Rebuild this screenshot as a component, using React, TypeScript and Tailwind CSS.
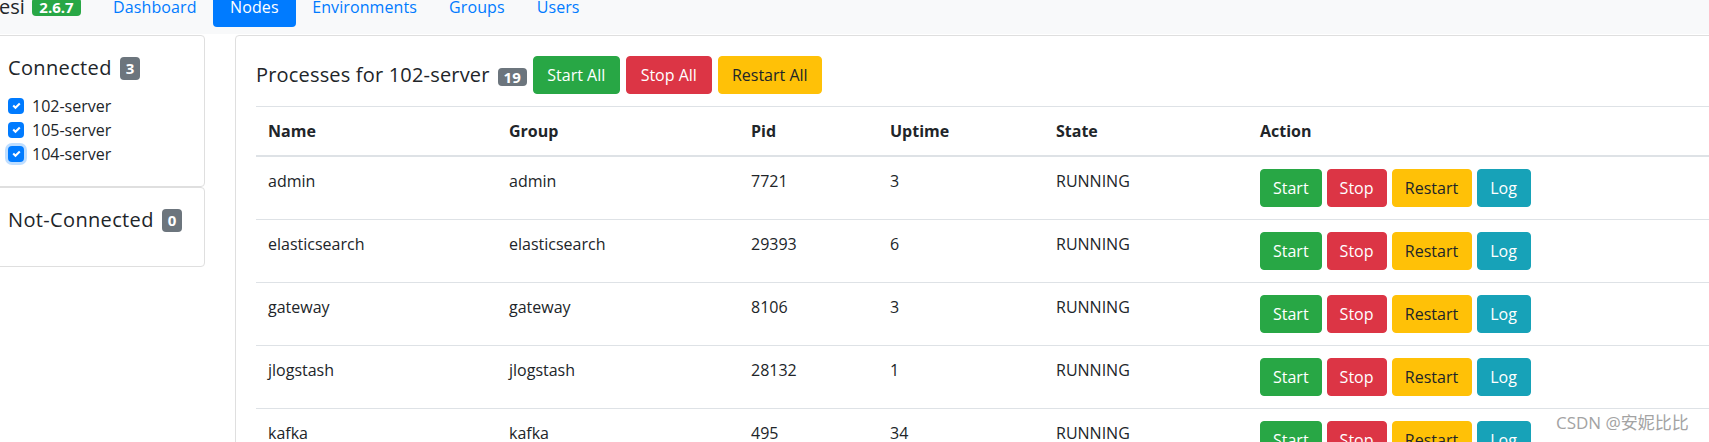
import React from 'react'

type Proc = {
  name: string
  group: string
  pid: string
  uptime: string
  state: string
}

const processes: Proc[] = [
  { name: 'admin', group: 'admin', pid: '7721', uptime: '3', state: 'RUNNING' },
  { name: 'elasticsearch', group: 'elasticsearch', pid: '29393', uptime: '6', state: 'RUNNING' },
  { name: 'gateway', group: 'gateway', pid: '8106', uptime: '3', state: 'RUNNING' },
  { name: 'jlogstash', group: 'jlogstash', pid: '28132', uptime: '1', state: 'RUNNING' },
  { name: 'kafka', group: 'kafka', pid: '495', uptime: '34', state: 'RUNNING' },
]

const servers = [
  { name: '102-server', focused: false },
  { name: '105-server', focused: false },
  { name: '104-server', focused: true },
]

const navLinks = ['Dashboard', 'Nodes', 'Environments', 'Groups', 'Users']

function CheckBox({ focused }: { focused: boolean }) {
  return (
    <span
      className={
        'flex h-4 w-4 shrink-0 items-center justify-center rounded-[4px] bg-[#007bff] ' +
        (focused ? 'shadow-[0_0_0_3px_rgba(0,123,255,0.25)]' : '')
      }
    >
      <svg width="9" height="8" viewBox="0 0 8 8">
        <path
          fill="#fff"
          d="M6.564.75l-3.59 3.612-1.538-1.55L0 4.26 2.974 7.25 8 2.193z"
        />
      </svg>
    </span>
  )
}

function Btn({
  label,
  tone,
  className = '',
}: {
  label: string
  tone: 'success' | 'danger' | 'warning' | 'info'
  className?: string
}) {
  const cls =
    tone === 'success'
      ? 'border-[#28a745] bg-[#28a745] text-white'
      : tone === 'danger'
        ? 'border-[#dc3545] bg-[#dc3545] text-white'
        : tone === 'warning'
          ? 'border-[#ffc107] bg-[#ffc107] text-[#212529]'
          : 'border-[#17a2b8] bg-[#17a2b8] text-white'

  return (
    <button
      type="button"
      className={
        'h-[38px] shrink-0 rounded-[4px] border px-3 text-[16px] leading-6 ' + cls + ' ' + className
      }
    >
      {label}
    </button>
  )
}

function SideCard({
  title,
  count,
  children,
}: {
  title: string
  count: number
  children?: React.ReactNode
}) {
  return (
    <div className="rounded-[4px] border border-[#dfdfdf] bg-white p-5">
      <h5 className="mb-[14px] flex items-center text-[20px] leading-6 font-medium tracking-[0.35px]">
        {title}
        <span className="ml-[8px] inline-block rounded-[4px] bg-[#6c757d] px-[6px] py-[4px] text-[15px] leading-[15px] font-bold tracking-normal text-white">
          {count}
        </span>
      </h5>
      {children}
    </div>
  )
}

export default function App() {
  return (
    <div className="relative h-[442px] w-full overflow-hidden bg-white font-['Open_Sans','Noto_Sans_CJK_SC',sans-serif] text-[16px] text-[#212529]">
      <div className="-mt-[20px]">
        <nav className="flex h-[54px] items-center bg-[#f8f9fa]">
          <a className="-ml-px mr-4 flex items-center py-[5px] text-[20px] leading-[30px]">
            esi
            <span className="ml-[7px] inline-block rounded-[4px] bg-[#28a745] px-[7.5px] py-[1.5px] text-[15px] leading-[15px] font-bold text-white">
              2.6.7
            </span>
          </a>
          <ul className="flex">
            {navLinks.map((link) => (
              <li key={link}>
                <a
                  className={
                    'block rounded-[4px] py-2 leading-6 tracking-[0.1px] ' +
                    (link === 'Nodes'
                      ? 'bg-[#007bff] px-[17.5px] text-white'
                      : 'px-4 text-[#007bff]')
                  }
                >
                  {link}
                </a>
              </li>
            ))}
          </ul>
        </nav>

        <div className="mt-px flex">
          <div className="-ml-[13px] w-[218px] shrink-0">
            <SideCard title="Connected" count={3}>
              <div>
                {servers.map((server) => (
                  <label key={server.name} className="flex h-6 items-center gap-2 leading-6">
                    <CheckBox focused={server.focused} />
                    {server.name}
                  </label>
                ))}
              </div>
            </SideCard>
            <SideCard title="Not-Connected" count={0} />
          </div>

          <div className="ml-[30px] w-[1500px] shrink-0 rounded-[4px] border border-[#dfdfdf] bg-white p-5">
            <div className="mb-3 flex h-[38px] items-center">
              <h5 className="text-[20px] leading-6 font-medium tracking-[0.18px]">
                Processes for 102-server
              </h5>
              <span className="ml-2 mt-[4px] inline-block rounded-[4px] bg-[#6c757d] px-[6px] py-[1.5px] text-[15px] leading-[15px] font-bold text-white">
                19
              </span>
              <div className="ml-[6px] flex gap-[6px]">
                <Btn label="Start All" tone="success" className="w-[87px] px-0" />
                <Btn label="Stop All" tone="danger" className="w-[86px] px-0" />
                <Btn label="Restart All" tone="warning" className="w-[104px] px-0" />
              </div>
            </div>

            <table className="w-[1458px] table-fixed border-collapse">
              <colgroup>
                <col className="w-[241px]" />
                <col className="w-[242px]" />
                <col className="w-[139px]" />
                <col className="w-[166px]" />
                <col className="w-[204px]" />
                <col />
              </colgroup>
              <thead>
                <tr>
                  {['Name', 'Group', 'Pid', 'Uptime', 'State', 'Action'].map((head) => (
                    <th
                      key={head}
                      className="border-t border-b-2 border-[#dee2e6] p-3 text-left align-bottom leading-6 font-bold"
                    >
                      {head}
                    </th>
                  ))}
                </tr>
              </thead>
              <tbody>
                {processes.map((proc) => (
                  <tr key={proc.name}>
                    <td className="border-t border-[#dee2e6] p-3 align-top leading-6">{proc.name}</td>
                    <td className="border-t border-[#dee2e6] p-3 align-top leading-6">{proc.group}</td>
                    <td className="border-t border-[#dee2e6] p-3 align-top leading-6">{proc.pid}</td>
                    <td className="border-t border-[#dee2e6] p-3 align-top leading-6">{proc.uptime}</td>
                    <td className="border-t border-[#dee2e6] p-3 align-top leading-6">{proc.state}</td>
                    <td className="border-t border-[#dee2e6] p-3 align-top">
                      <div className="flex gap-[5px]">
                        <Btn label="Start" tone="success" />
                        <Btn label="Stop" tone="danger" />
                        <Btn label="Restart" tone="warning" className="w-[80px] px-0" />
                        <Btn label="Log" tone="info" className="w-[54px] px-0" />
                      </div>
                    </td>
                  </tr>
                ))}
              </tbody>
            </table>
          </div>
        </div>
      </div>

      <div className="absolute left-[1556px] top-[411px] text-[17px] leading-6 text-[#a3a3a3]">
        CSDN @安妮比比
      </div>
    </div>
  )
}
